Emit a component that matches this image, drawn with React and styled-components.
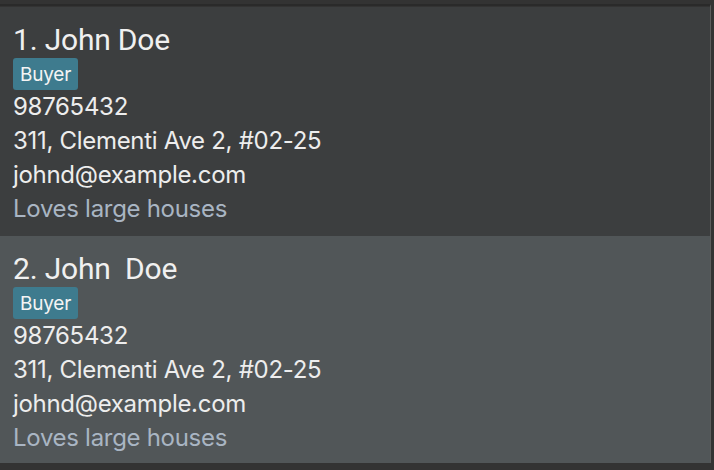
import styled, { createGlobalStyle } from "styled-components";

const GlobalStyle = createGlobalStyle`
  html, body {
    margin: 0;
    padding: 0;
    background: #333333;
  }
`;

const persons = [
  {
    name: "John Doe",
    tags: ["Buyer"],
    phone: "98765432",
    address: "311, Clementi Ave 2, #02-25",
    email: "johnd@example.com",
    remark: "Loves large houses",
  },
  {
    name: "John  Doe",
    tags: ["Buyer"],
    phone: "98765432",
    address: "311, Clementi Ave 2, #02-25",
    email: "johnd@example.com",
    remark: "Loves large houses",
  },
];

const Frame = styled.div`
  width: 714px;
  height: 470px;
  background: #333333;
  padding-top: 4px;
  box-sizing: border-box;
  overflow: hidden;
`;

const PersonList = styled.div`
  display: flex;
  flex-direction: column;
  border-top: 2px solid #2a2a2a;
  padding-top: 1px;
  width: 711px;
  border-right: 1px solid #5c5c5c;
  box-sizing: border-box;
`;

const Card = styled.div`
  display: flex;
  flex-direction: column;
  align-items: flex-start;
  padding: 16px 13px 10px;
  height: ${(props) => (props.$odd ? "227px" : "229px")};
  box-sizing: border-box;
  background: ${(props) => (props.$odd ? "#515658" : "#3c3e3f")};
`;

const Name = styled.div`
  font-family: Roboto, "Liberation Sans", sans-serif;
  font-size: 30px;
  line-height: 34px;
  color: #f0f0f0;
  white-space: pre;
  letter-spacing: -0.2px;
`;

const Tags = styled.div`
  display: flex;
  gap: 6px;
  margin-top: 1px;
`;

const Tag = styled.span`
  display: inline-flex;
  align-items: center;
  height: 32px;
  padding: 0 7px;
  box-sizing: border-box;
  border-radius: 3px;
  background: #3e7b8e;
  color: #f4f4f4;
  font-family: Inter, "Liberation Sans", sans-serif;
  font-size: 19px;
  letter-spacing: -0.2px;
`;

const Field = styled.div`
  font-family: Inter, "Liberation Sans", sans-serif;
  font-size: 24px;
  line-height: 34px;
  letter-spacing: -0.3px;
  color: ${(props) => (props.$muted ? "#a9b5c3" : "#ededed")};
  white-space: nowrap;
`;

export default function App() {
  return (
    <>
      <GlobalStyle />
      <Frame>
        <PersonList>
          {persons.map((person, index) => (
            <Card key={index} $odd={index % 2 === 1}>
              <Name>
                {index + 1}. {person.name}
              </Name>
              <Tags>
                {person.tags.map((tag) => (
                  <Tag key={tag}>{tag}</Tag>
                ))}
              </Tags>
              <Field>{person.phone}</Field>
              <Field>{person.address}</Field>
              <Field>{person.email}</Field>
              <Field $muted>{person.remark}</Field>
            </Card>
          ))}
        </PersonList>
      </Frame>
    </>
  );
}
